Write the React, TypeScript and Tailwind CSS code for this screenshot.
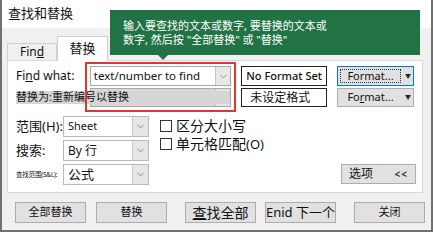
import { ChevronDown } from 'lucide-react'

const font = { fontFamily: '"Noto Sans", "Noto Sans CJK SC", sans-serif' }

function Select({ value, textClass }: { value: string; textClass: string }) {
  return (
    <div className="flex h-[21px] w-[86px] border border-[#b9b9b9] bg-white">
      <div className={`flex-1 flex items-center pl-[4px] text-[#111] ${textClass}`}>{value}</div>
      <div className="w-[16px] flex items-center justify-center bg-[#e6e6e6] border-l border-[#c4c4c4]">
        <ChevronDown size={11} strokeWidth={1.6} className="text-[#666]" />
      </div>
    </div>
  )
}

function Checkbox({ label }: { label: React.ReactNode }) {
  return (
    <div className="flex items-center gap-[4px] h-[18px]">
      <div className="w-[12px] h-[12px] border border-[#333] bg-white" />
      <span className="text-[14px] leading-[16px] text-[#111]">{label}</span>
    </div>
  )
}

function FormatButton({ focused }: { focused?: boolean }) {
  return (
    <div
      className={`flex w-[77px] h-full bg-[#e1e1e1] border ${
        focused ? 'border-[#0078d7]' : 'border-[#adadad]'
      }`}
    >
      <div className="flex-1 flex items-center justify-center p-[2px]">
        <div
          className={`w-full h-full flex items-center justify-center text-[11px] text-[#111] ${
            focused ? 'border border-dotted border-[#333]' : ''
          }`}
        >
          {focused ? 'Format...' : <span>Fo<span className="underline">r</span>mat...</span>}
        </div>
      </div>
      <div className="w-[10px] flex items-center justify-center text-[6px] text-[#222]">▼</div>
    </div>
  )
}

function BottomButton({ children, className = '' }: { children: React.ReactNode; className?: string }) {
  return (
    <div
      className={`w-[71px] h-[21px] flex items-center justify-center bg-[#e1e1e1] border border-[#adadad] text-[#111] ${className}`}
    >
      {children}
    </div>
  )
}

export default function App() {
  return (
    <div
      style={font}
      className="relative w-[433px] h-[232px] bg-[#f0f0f0] border-x-2 border-b-2 border-[#707070] overflow-hidden flex flex-col"
    >
      {/* Title bar */}
      <div className="h-[28px] bg-white flex items-center pl-[6px] text-[13px] text-[#111]">查找和替换</div>

      {/* Tabs */}
      <div className="h-[32px] flex items-end pl-[5px]">
        <div className="w-[50px] h-[17px] border border-b-0 border-[#d0d0d0] flex items-center justify-center text-[12px] text-[#111]">
          Fin<span className="underline">d</span>
        </div>
        <div className="w-[51px] h-[25px] bg-white border border-b-0 border-[#d0d0d0] flex items-center justify-center text-[13px] text-[#111] -mb-px relative z-10">
          替换
        </div>
      </div>

      {/* Panel */}
      <div className="relative ml-[5px] w-[416px] h-[133px] bg-white border border-[#d9d9d9] px-[8px] pt-[5px]">
        <div className="flex h-[20px] items-stretch">
          <div className="w-[74px] flex items-center text-[12px] text-[#111]">
            Fi<span className="underline">n</span>d what:
          </div>
          <div className="w-[142px] flex border border-[#a8a8a8] bg-white">
            <div className="flex-1 flex items-center pl-[3px] text-[11.5px] text-[#111] whitespace-nowrap">text/number to find</div>
            <div className="w-[15px] flex items-center justify-center bg-[#e8e8e8] border-l border-[#c4c4c4]">
              <ChevronDown size={11} strokeWidth={1.6} className="text-[#777]" />
            </div>
          </div>
          <div className="ml-[10px] w-[86px] border border-[#222] flex items-center justify-center text-[11px] font-medium text-[#111] whitespace-nowrap">
            No Format Set
          </div>
          <div className="ml-[10px]">
            <FormatButton focused />
          </div>
        </div>

        <div className="relative flex h-[19px] mt-[2px] items-stretch">
          <div className="w-[74px]" />
          <div className="w-[142px] flex border border-[#a8a8a8] bg-[#d8d8d8]">
            <div className="flex-1" />
            <div className="w-[15px] bg-[#e4e4e4] border-l border-[#c4c4c4]" />
          </div>
          <div className="absolute left-0 top-[3px] w-[214px] h-[13px] bg-[#d6d6d6] flex items-center text-[11px] text-[#111]">
            替换为:重新编号以替换
          </div>
          <div className="ml-[10px] w-[86px] border border-[#222] flex items-center pl-[8px] text-[12px] text-[#111]">
            未设定格式
          </div>
          <div className="ml-[10px]">
            <FormatButton />
          </div>
        </div>

        {/* Red highlight */}
        <div className="absolute left-[77px] top-[1px] w-[151px] h-[50px] border-2 border-[#e2352c]" />

        <div className="flex mt-[9px]">
          <div className="flex flex-col gap-[3px]">
            <div className="flex items-center">
              <div className="w-[47px] text-[13px] text-[#111] whitespace-nowrap">范围(H):</div>
              <Select value="Sheet" textClass="text-[11px]" />
            </div>
            <div className="flex items-center">
              <div className="w-[47px] text-[13px] text-[#111]">搜索:</div>
              <Select value="By 行" textClass="text-[12px]" />
            </div>
            <div className="flex items-center">
              <div className="w-[47px] text-[6.5px] text-[#111] whitespace-nowrap tracking-[-0.2px]">查找范围(S&amp;L):</div>
              <Select value="公式" textClass="text-[13px]" />
            </div>
          </div>
          <div className="ml-[11px] mt-[1px] flex flex-col">
            <Checkbox label="区分大小写" />
            <Checkbox label={<span>单元格匹配<span className="text-[13px]">(O)</span></span>} />
          </div>
          <div className="ml-auto self-end mr-[-2px] mb-[1px] w-[75px] h-[20px] bg-[#e1e1e1] border border-[#adadad] flex items-center justify-between px-[7px] text-[12px] text-[#111]">
            <span>选项</span>
            <span className="text-[10px] font-bold text-[#333] tracking-[1px]">&lt;&lt;</span>
          </div>
        </div>
      </div>

      {/* Bottom buttons */}
      <div className="flex mt-[9px] pl-[13px]">
        <BottomButton className="text-[11px]">全部替换</BottomButton>
        <BottomButton className="ml-[10px] text-[11px]">替换</BottomButton>
        <BottomButton className="ml-[18px] text-[14px]">
          <span className="underline">查</span>找全部
        </BottomButton>
        <BottomButton className="ml-[9px] text-[13px]">Enid 下一个</BottomButton>
        <BottomButton className="ml-[18px] text-[11px]">关闭</BottomButton>
      </div>

      {/* Tooltip */}
      <div className="absolute left-[108px] top-[10px] w-[310px] h-[45px] bg-[#217346] text-white text-[11px] leading-[14px] pl-[13px] pt-[9px] z-20">
        <div>输入要查找的文本或数字, 要替换的文本或</div>
        <div>数字, 然后按 "全部替换" 或 "替换"</div>
        <div className="absolute left-[48px] bottom-[-5px] w-0 h-0 border-x-[5px] border-x-transparent border-t-[5px] border-t-[#217346]" />
      </div>
    </div>
  )
}
